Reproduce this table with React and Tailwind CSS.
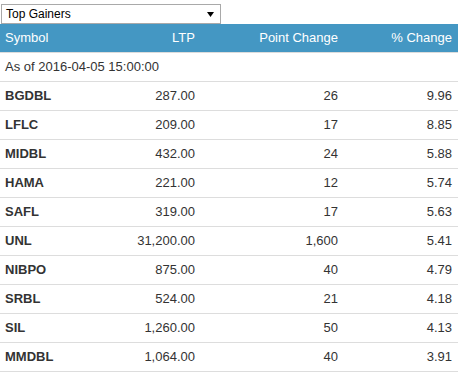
import React from "react";

const rows = [
  ["BGDBL", "287.00", "26", "9.96"],
  ["LFLC", "209.00", "17", "8.85"],
  ["MIDBL", "432.00", "24", "5.88"],
  ["HAMA", "221.00", "12", "5.74"],
  ["SAFL", "319.00", "17", "5.63"],
  ["UNL", "31,200.00", "1,600", "5.41"],
  ["NIBPO", "875.00", "40", "4.79"],
  ["SRBL", "524.00", "21", "4.18"],
  ["SIL", "1,260.00", "50", "4.13"],
  ["MMDBL", "1,064.00", "40", "3.91"],
];

const font = { fontFamily: '"Liberation Sans", Arial, sans-serif' };

export default function App() {
  return (
    <div className="w-[462px] h-[374px] bg-white text-[#333] text-[13px]" style={font}>
      <div className="pt-[4px] pl-[1px]">
        <div className="w-[220px] h-[20px] border border-[#a9a9a9] bg-white flex items-center justify-between pl-[4px] pr-[6px] text-[12px] text-black">
          <span>Top Gainers</span>
          <svg width="7" height="5" viewBox="0 0 7 5">
            <path d="M0 0H7L3.5 5Z" fill="#000" />
          </svg>
        </div>
      </div>
      <div className="w-[458px]">
        <div className="grid grid-cols-[100px_100px_143px_115px] h-[29px] bg-[#4497c3] text-white border-b border-[#dcdcdc] items-center">
          <div className="pl-[5px]">Symbol</div>
          <div className="text-right pr-[5px]">LTP</div>
          <div className="text-right pr-[5px]">Point Change</div>
          <div className="text-right pr-[6px]">% Change</div>
        </div>
        <div className="h-[29px] flex items-center pl-[5px] border-b border-[#dddddd]">
          As of 2016-04-05 15:00:00
        </div>
        {rows.map((r) => (
          <div
            key={r[0]}
            className="grid grid-cols-[100px_100px_143px_115px] h-[29px] items-center border-b border-[#dddddd]"
          >
            <div className="pl-[5px] font-bold">{r[0]}</div>
            <div className="text-right pr-[5px]">{r[1]}</div>
            <div className="text-right pr-[5px]">{r[2]}</div>
            <div className="text-right pr-[6px]">{r[3]}</div>
          </div>
        ))}
      </div>
    </div>
  );
}
